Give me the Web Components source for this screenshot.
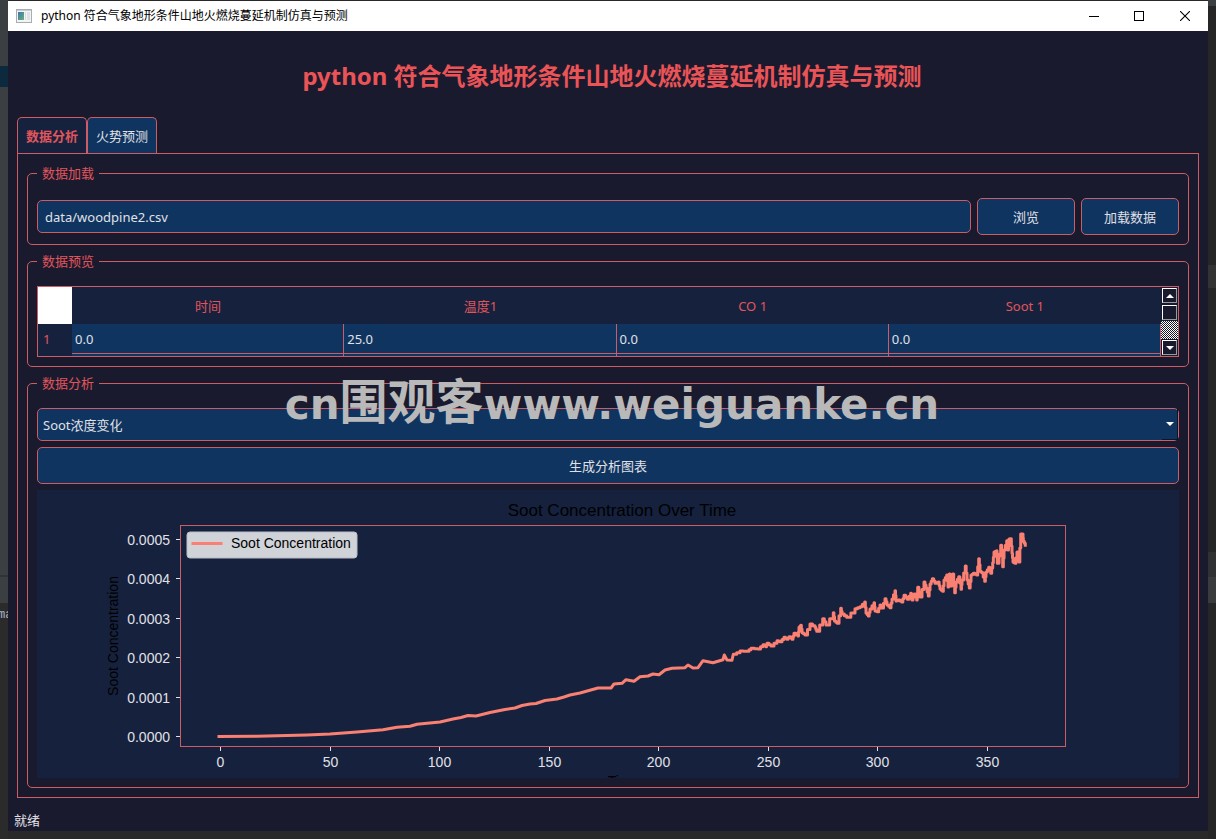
<!DOCTYPE html>
<html lang="zh-CN">
<head>
<meta charset="utf-8">
<title>python 符合气象地形条件山地火燃烧蔓延机制仿真与预测</title>
<style>
  :root {
    --bg: #1a1a2e;
    --panel: #16213e;
    --field: #0f3460;
    --accent: #e0565c;
    --line: #cd5c64;
    --text: #e0e0e6;
  }
  body {
    margin: 0;
    background: #2b2b2b;
    color: var(--text);
    font: 13px/20px "Noto Sans", "Noto Sans CJK SC", sans-serif;
  }
</style>
</head>
<body>
<desktop-backdrop>
  <app-window heading="python 符合气象地形条件山地火燃烧蔓延机制仿真与预测">
    <tab-pane>
      <group-box label="数据加载"><file-picker value="data/woodpine2.csv"></file-picker></group-box>
      <group-box label="数据预览"><data-preview></data-preview></group-box>
      <group-box label="数据分析"><analysis-form></analysis-form></group-box>
    </tab-pane>
    <span slot="status">就绪</span>
  </app-window>
</desktop-backdrop>
<water-mark></water-mark>

<script>
const define = (name, html, setup) => {
  customElements.define(name, class extends HTMLElement {
    constructor() {
      super();
      this.attachShadow({ mode: "open" }).innerHTML = html;
    }
    connectedCallback() {
      if (setup) setup(this, this.shadowRoot);
    }
  });
};

define("desktop-backdrop", `
  <style>
    :host {
      display: grid;
      grid-template-columns: 8px minmax(0, 1fr) 8px;
      box-sizing: border-box;
      min-height: 100vh;
      padding: 1px 0 8px;
      background: #292929;
    }
    .left {
      margin: -1px 0 -8px;
      overflow: hidden;
      color: #a9b7c6;
      background: linear-gradient(#3c3f41 66px, #0d293e 66px 87px, #3c3f41 87px 575px, #323232 575px 577px, #3c3f41 577px 603px, #2b2b2b 603px);
      font: 12px/16px "Liberation Mono", monospace;
    }
    .left span {
      display: block;
      margin-top: 607px;
      text-indent: -2px;
    }
    .right {
      margin: -1px 0 -8px;
      background: linear-gradient(#3c3f41 6px, #262626 6px 265px, #333 265px 288px, #262626 288px 552px, #2f3132 552px 577px, #3a3b3c 577px 603px, #262626 603px);
    }
  </style>
  <div class="left"><span>ma</span></div>
  <slot></slot>
  <div class="right"></div>
`);

define("app-window", `
  <style>
    :host {
      display: flex;
      flex-direction: column;
      min-width: 0;
      background: var(--bg);
    }
    .titlebar {
      display: flex;
      align-items: center;
      height: 30px;
      padding-left: 8px;
      color: #000;
      background: #fff;
      font-size: 12px;
    }
    .titlebar span {
      flex: 1;
      margin-left: 9px;
    }
    .titlebar button {
      display: grid;
      place-items: center;
      width: 46px;
      height: 30px;
      padding: 0;
      border: 0;
      background: none;
    }
    .titlebar button:first-of-type {
      width: 45px;
    }
    h1 {
      margin: 0;
      padding: 27px 0 23px 8px;
      color: #eb5456;
      font-size: 24px;
      line-height: 36px;
      text-align: center;
    }
    main {
      padding: 0 9px;
    }
    footer {
      padding: 12px 6px 1px;
    }
  </style>
  <div class="titlebar">
    <svg width="16" height="14" viewBox="0 0 16 14">
      <defs>
        <linearGradient id="g" x1="0" y1="0" x2="1" y2="1">
          <stop offset="0" stop-color="#3b74b8"/><stop offset="1" stop-color="#6bb26f"/>
        </linearGradient>
      </defs>
      <rect x=".5" y=".5" width="15" height="13" fill="#f4f4f4" stroke="#a8adb0"/>
      <path d="M1 1.5h14" stroke="#c7ced3"/>
      <rect x="2" y="3" width="6" height="8" fill="url(#g)"/>
      <path d="M9.500 3v8" stroke="#d5dde2"/>
      <rect x="11" y="3" width="3" height="8" fill="#dce2e6"/>
    </svg>
    <span></span>
    <button aria-label="最小化"><svg width="10" height="10"><path d="M0 5.500h10" stroke="#000"/></svg></button>
    <button aria-label="最大化"><svg width="10" height="10"><rect x=".5" y=".5" width="9" height="9" fill="none" stroke="#000"/></svg></button>
    <button aria-label="关闭"><svg width="10" height="10"><path d="M0 0l10 10M10 0L0 10" stroke="#000" stroke-width="1.1"/></svg></button>
  </div>
  <h1></h1>
  <main><slot></slot></main>
  <footer><slot name="status"></slot></footer>
`, (host, root) => {
  const heading = host.getAttribute("heading");
  root.querySelector(".titlebar span").textContent = heading;
  root.querySelector("h1").textContent = heading;
});

define("tab-pane", `
  <style>
    :host { display: block; }
    nav { display: flex; }
    button {
      box-sizing: border-box;
      height: 36px;
      width: 70px;
      padding: 0;
      border: 1px solid var(--line);
      border-bottom: 0;
      border-radius: 5px 5px 0 0;
      color: var(--text);
      background: var(--field);
      font: inherit;
    }
    button[aria-selected="true"] {
      color: var(--accent);
      background: var(--panel);
      font-weight: bold;
    }
    section {
      display: flex;
      flex-direction: column;
      gap: 6px;
      padding: 9px;
      border: 1px solid var(--line);
    }
  </style>
  <nav role="tablist">
    <button role="tab" aria-selected="true">数据分析</button>
    <button role="tab" aria-selected="false">火势预测</button>
  </nav>
  <section role="tabpanel"><slot></slot></section>
`, (host, root) => {
  const tabs = [...root.querySelectorAll("button")];
  for (const tab of tabs) {
    tab.addEventListener("click", () => {
      for (const t of tabs) t.setAttribute("aria-selected", t === tab);
    });
  }
});

define("group-box", `
  <style>
    :host { display: block; }
    fieldset {
      min-width: 0;
      margin: 0;
      padding: 15px 9px 9px;
      border: 1px solid var(--line);
      border-radius: 5px;
    }
    legend {
      padding: 0 5px;
      color: var(--accent);
    }
  </style>
  <fieldset><legend></legend><slot></slot></fieldset>
`, (host, root) => {
  root.querySelector("legend").textContent = host.getAttribute("label");
});

define("file-picker", `
  <style>
    :host {
      display: flex;
      align-items: center;
      gap: 6px;
    }
    input, button {
      box-sizing: border-box;
      border: 1px solid var(--line);
      border-radius: 5px;
      color: var(--text);
      background: var(--field);
      font: inherit;
    }
    input {
      flex: 1;
      min-width: 0;
      height: 33px;
      padding: 0 7px;
    }
    button {
      width: 98px;
      height: 37px;
      padding: 0;
    }
  </style>
  <input type="text" aria-label="数据文件">
  <button>浏览</button>
  <button>加载数据</button>
`, (host, root) => {
  root.querySelector("input").value = host.getAttribute("value");
});

define("scroll-strip", `
  <style>
    :host {
      display: flex;
      flex: none;
      flex-direction: column;
      width: 17px;
      background: repeating-conic-gradient(#fff 0 25%, #1a1a2e 0 50%) 0 0 / 2px 2px;
    }
    button, .thumb {
      box-sizing: border-box;
      display: grid;
      place-items: center;
      width: 15px;
      height: 15px;
      margin: 1px;
      padding: 0;
      border: 1px solid;
      border-color: #fff #9a9a9a #9a9a9a #fff;
      background: var(--bg);
    }
    .track { flex: 1; }
    .end { background: var(--bg); }
  </style>
  <div class="end"><button aria-label="向上"><svg width="8" height="4"><path d="M0 4L4 0l4 4z" fill="#fff"/></svg></button></div>
  <div class="end"><div class="thumb"></div></div>
  <div class="track"></div>
  <div class="end"><button aria-label="向下"><svg width="8" height="4"><path d="M0 0h8L4 4z" fill="#fff"/></svg></button></div>
`);

define("data-preview", `
  <style>
    :host {
      display: flex;
      border: 1px solid var(--line);
      background: var(--field);
    }
    table {
      width: 100%;
      min-width: 0;
      table-layout: fixed;
      border-collapse: separate;
      border-spacing: 0;
    }
    th, td {
      box-sizing: border-box;
      padding: 0 3px;
      font-weight: normal;
    }
    th {
      color: var(--accent);
      background: var(--panel);
    }
    thead th { height: 37px; }
    thead td {
      width: 34px;
      background: #fff;
    }
    tbody th {
      padding: 0 5px;
      text-align: left;
    }
    tbody td {
      height: 30px;
      border: solid var(--line);
      border-width: 0 1px 1px 0;
    }
    .next td, .next th {
      height: 2px;
      padding: 0;
      border-bottom: 0;
      line-height: 0;
    }
  </style>
  <table>
    <thead><tr><td></td></tr></thead>
    <tbody><tr><th scope="row">1</th></tr></tbody>
    <tbody class="next" aria-hidden="true"><tr><th></th></tr></tbody>
  </table>
  <scroll-strip></scroll-strip>
`, (host, root) => {
  const columns = { "时间": "0.0", "温度1": "25.0", "CO 1": "0.0", "Soot 1": "0.0" };
  const [head, row, next] = root.querySelectorAll("tr");
  for (const [name, value] of Object.entries(columns)) {
    head.insertAdjacentHTML("beforeend", `<th scope="col">${name}</th>`);
    row.insertAdjacentHTML("beforeend", `<td>${value}</td>`);
    next.insertAdjacentHTML("beforeend", "<td></td>");
  }
});

define("analysis-form", `
  <style>
    :host {
      display: flex;
      flex-direction: column;
      gap: 6px;
    }
    .combo {
      position: relative;
      display: flex;
    }
    select, button {
      box-sizing: border-box;
      width: 100%;
      border: 1px solid var(--line);
      border-radius: 5px;
      color: var(--text);
      background: var(--field);
      font: inherit;
    }
    select {
      height: 33px;
      padding: 0 5px;
      appearance: none;
    }
    button { height: 37px; }
    .drop {
      position: absolute;
      top: 1px;
      right: 1px;
      bottom: 1px;
      display: grid;
      place-items: center;
      width: 15px;
      border: solid #08182c;
      border-width: 0 1px 1px 0;
      pointer-events: none;
    }
  </style>
  <div class="combo">
    <select aria-label="分析类型"><option>Soot浓度变化</option></select>
    <span class="drop"><svg width="8" height="4"><path d="M0 0h8L4 4z" fill="#fff"/></svg></span>
  </div>
  <button>生成分析图表</button>
  <soot-chart></soot-chart>
`);

// Soot curve in chart units
const SOOT = `182,246.500 220,246.300 240,245.700 270,245 293,244 320,242 346,239.700 360,237.300 373,236.300 380,234.300
  403,232 416,229 424,227.500 431,225.500 439,226 453,222.500 468,219.500 478,218 485,215.500 493,214 499,213.500
  508,210.500 520,209 527,207 533,205 543,203 561,198 574,198 577,194 585,193.300 589,189.700 597,191.300
  603,186.700 611,186 616,184 622,184.700 628,180 635,178.300 648,177.700 651,175 656,178 661,177.700
  666,170.700 676,172.700 686,169.700 687.300,165 690,170 695,170.300 696.300,164.300 703,161 710,161.300
  714,158.300 721,159 726,154.700 729,156.700 730,153.300 734,156 740,150.700 743,151.700 747,147.300
  750,149.300 752,146.700 755,149.300 757,143.300 761,146 762,137.300 763.700,135.300 765,142.700 768,145
  773,134 778,137.300 779.700,141.300 785.700,128.700 789,135 796.300,122.700 797.500,131 800.300,133.300
  803.700,118.300 805,124 809.700,127.300 818,118.700 823,116.700 827.700,112 829,123 831.300,126 833,119
  837,112.700 838,121 840.300,121.700 843,115 845,118 848,108.700 850,115 853,117.700 855,109 858,100.700
  859,111 861.300,110 864.700,112 867,105.300 870.300,109.300 873.700,103.300 875,110 877,104 879.700,110
  880.700,97.300 883,107 887,92 889,98 891.300,106 893,94 895.300,88.700 898,93.300 901.300,92 903,99
  905.700,101.300 907,90 909.700,85 911,97 912.300,84 914,96 915.700,84 917.700,102.700 919,92 921.700,86.700
  924,99.300 925,90 928.300,76 930,90 932.300,98 934,85 936.300,83.300 939.700,85 941.700,68.700 943,81
  944.700,82.700 947.700,91.300 949,82 951.700,77.300 953.700,83.300 955.700,72.700 957,62 959.700,60.700
  960.300,73.300 963.700,55.300 965.700,76.700 967,60 969.700,50.700 971,60 972,49 973.700,48.700 975,63.300
  976,72 978,73.300 980,62 982,72 983.700,44 985.700,44 986.300,51.300 988.300,55.300`;

const stepped = SOOT.trim().split(/\s+/).map((pair) => pair.split(",").map(Number)).reduce((points, [x, y]) => {
  const last = points[points.length - 1];
  if (x > 700) {
    const mid = (last[0] + x) / 2;
    points.push([mid, last[1]], [mid, (last[1] + y) / 2], [x, (last[1] + y) / 2]);
  }
  points.push([x, y]);
  return points;
}, []).join(" ");

define("soot-chart", `
  <style>
    :host {
      display: block;
      background: var(--panel);
    }
    svg {
      display: block;
      width: 100%;
      font-family: "Liberation Sans", Arial, sans-serif;
      font-size: 14px;
    }
    .title { font-size: 17px; }
    .ticks { fill: var(--text); }
    .marks { stroke: var(--text); }
    .curve {
      fill: none;
      stroke: #fa8072;
      stroke-width: 3;
      stroke-linejoin: round;
      stroke-linecap: square;
    }
  </style>
  <svg viewBox="0 0 1142 288" role="img" aria-label="Soot Concentration Over Time">
    <text class="title" x="585" y="26" text-anchor="middle">Soot Concentration Over Time</text>
    <rect x="143.500" y="35.500" width="885" height="221" fill="none" stroke="var(--line)"/>
    <g class="marks"></g>
    <g class="ticks"></g>
    <polyline class="curve" points="${stepped}"/>
    <rect x="150" y="42" width="170" height="26" rx="3" fill="#d0d3d8" stroke="#b9bdc5"/>
    <path class="curve" d="M156 53.500h28"/>
    <text x="194" y="58">Soot Concentration</text>
    <text transform="translate(81 146) rotate(-90)" text-anchor="middle">Soot Concentration</text>
    <text x="586" y="296" text-anchor="middle">Time</text>
  </svg>
`, (host, root) => {
  const marks = root.querySelector(".marks");
  const ticks = root.querySelector(".ticks");
  let lines = "";
  let labels = "";
  for (let i = 0; i < 8; i++) {
    const x = Math.round(183 + i * 109.5) + 0.5;
    lines += `<path d="M${x} 257v4"/>`;
    labels += `<text x="${x}" y="277" text-anchor="middle">${i * 50}</text>`;
  }
  for (let i = 0; i < 6; i++) {
    const y = Math.round(246 - i * 39.4) + 0.5;
    lines += `<path d="M139 ${y}h4"/>`;
    labels += `<text x="133" y="${y + 5}" text-anchor="end">${(i / 10000).toFixed(4)}</text>`;
  }
  marks.innerHTML = lines;
  ticks.innerHTML = labels;
});

define("water-mark", `
  <style>
    :host {
      position: absolute;
      top: 372px;
      left: 8px;
      right: 0;
      color: #b9b9b9;
      font: bold 42px/60px "DejaVu Sans", "Noto Sans CJK SC", sans-serif;
      text-align: center;
      white-space: nowrap;
      pointer-events: none;
    }
    span { font-size: 48px; }
  </style>
  cn<span>围观客</span>www.weiguanke.cn
`);
</script>
</body>
</html>
